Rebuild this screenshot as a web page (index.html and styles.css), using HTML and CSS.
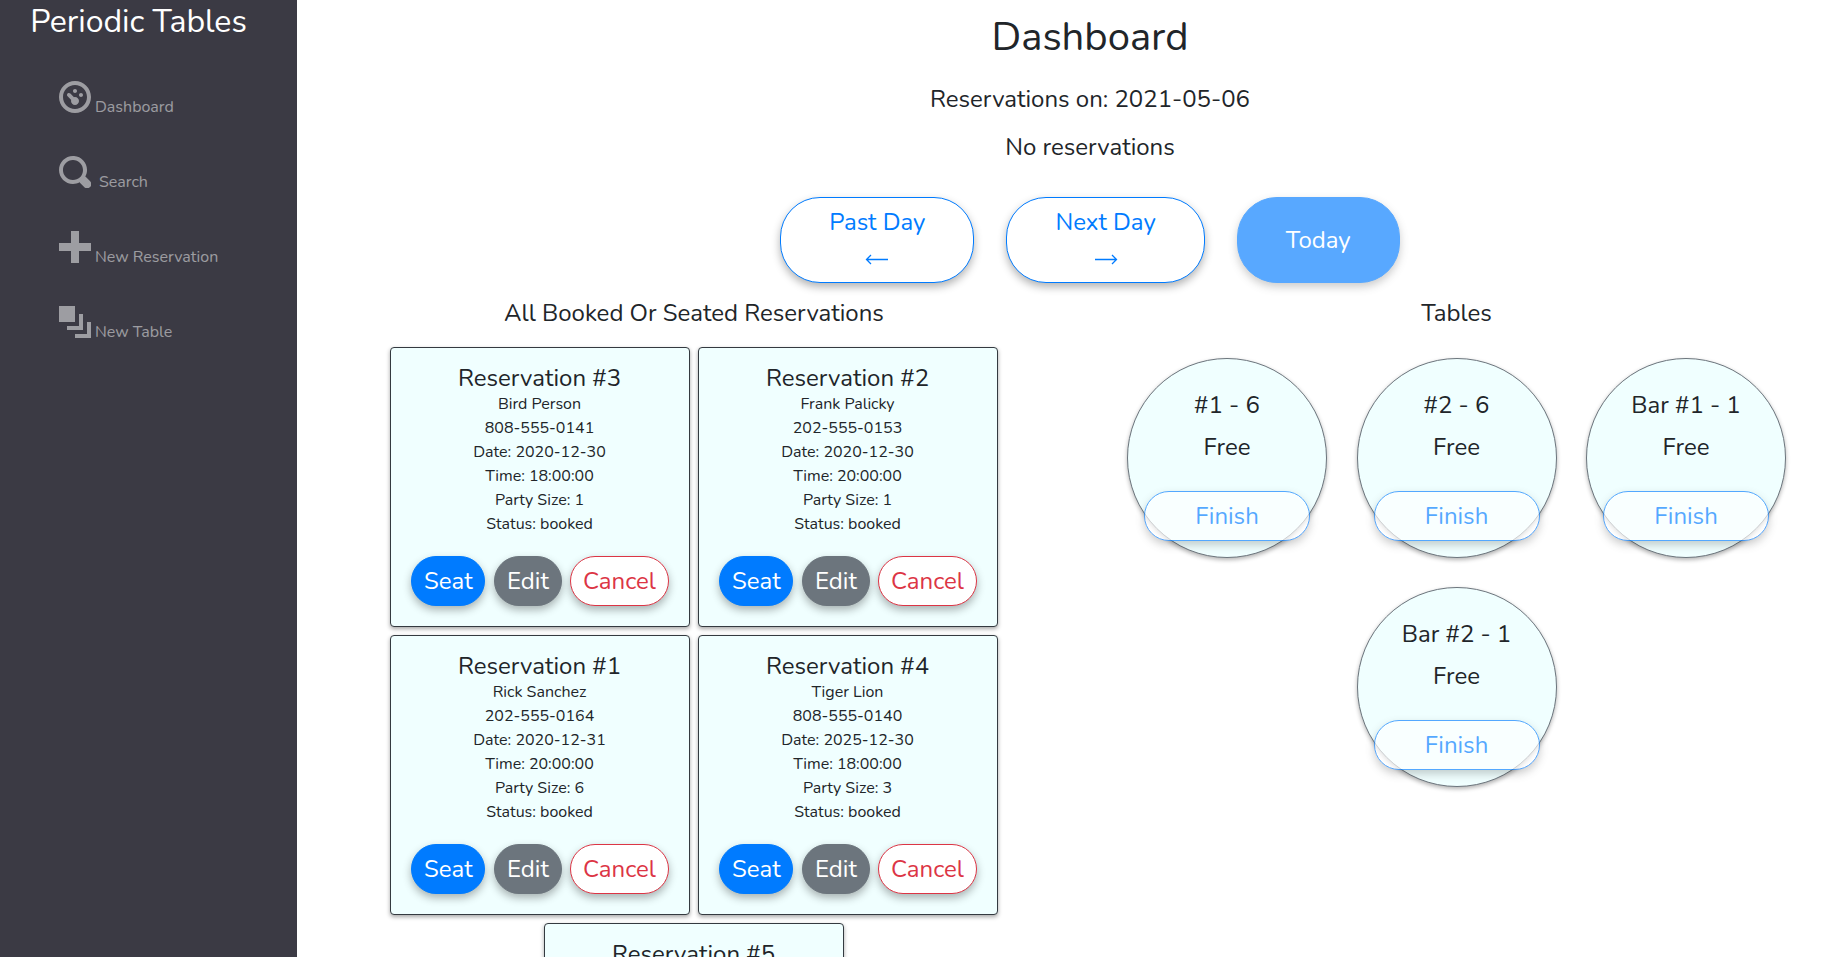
FILE: index.html
```html
<!DOCTYPE html>
<html lang="en">
<head>
<meta charset="utf-8">
<title>Periodic Tables</title>
<link rel="stylesheet" href="styles.css">
</head>
<body>
<div class="layout">
  <nav class="sidebar">
    <h2 class="brand">Periodic Tables</h2>
    <ul class="menu">
      <li><a class="menu-link" href="#"><svg class="icon" viewBox="0 0 8 8"><path d="M4 0c-2.2 0-4 1.8-4 4s1.8 4 4 4 4-1.8 4-4-1.8-4-4-4zm0 1c1.66 0 3 1.34 3 3s-1.34 3-3 3-3-1.34-3-3 1.34-3 3-3zm0 1c-.28 0-.5.22-.5.5s.22.5.5.5.5-.22.5-.5-.22-.5-.5-.5zm-1.66 1a.5.5 0 0 0-.19.84l.91.91c-.02.08-.06.16-.06.25 0 .55.45 1 1 1s1-.45 1-1-.45-1-1-1c-.09 0-.17.04-.25.06l-.91-.91a.5.5 0 0 0-.44-.16.5.5 0 0 0-.06 0zm3.16 0c-.28 0-.5.22-.5.5s.22.5.5.5.5-.22.5-.5-.22-.5-.5-.5z"/></svg><span>Dashboard</span></a></li>
      <li><a class="menu-link spaced" href="#"><svg class="icon" viewBox="0 0 8 8"><path d="M3.5 0c-1.93 0-3.5 1.57-3.5 3.5s1.57 3.5 3.5 3.5c.59 0 1.17-.14 1.66-.41a1 1 0 0 0 .13.13l1 1a1.02 1.02 0 1 0 1.44-1.44l-1-1a1 1 0 0 0-.16-.13c.27-.49.44-1.06.44-1.66 0-1.93-1.55-3.5-3.5-3.5zm0 1c1.39 0 2.5 1.11 2.5 2.5 0 .66-.24 1.27-.66 1.72-.01.01-.02.02-.03.03a1 1 0 0 0-.13.13c-.44.4-1.04.63-1.69.63-1.39 0-2.5-1.11-2.5-2.5s1.11-2.5 2.5-2.5z"/></svg><span>Search</span></a></li>
      <li><a class="menu-link" href="#"><svg class="icon" viewBox="0 0 8 8"><path d="M3 0v3h-3v2h3v3h2v-3h3v-2h-3v-3h-2z"/></svg><span>New Reservation</span></a></li>
      <li><a class="menu-link" href="#"><svg class="icon" viewBox="0 0 8 8"><path d="M0 0v4h4v-4h-4zm5 2v3h-3v1h4v-4h-1zm2 2v3h-3v1h4v-4h-1z"/></svg><span>New Table</span></a></li>
    </ul>
  </nav>
  <main class="content">
    <h1 class="page-title">Dashboard</h1>
    <h4 class="heading date">Reservations on: 2021-05-06</h4>
    <h4 class="heading empty">No reservations</h4>
    <div class="day-nav">
      <button class="btn day outline-primary">Past Day<svg class="arrow" viewBox="0 0 24 36"><path d="M23 19.5H1.5M6 15L1.5 19.5L6 24"/></svg></button>
      <button class="btn day outline-primary">Next Day<svg class="arrow" viewBox="0 0 24 36"><path d="M1 19.5H22.5M18 15L22.5 19.5L18 24"/></svg></button>
      <button class="btn day primary" disabled>Today</button>
    </div>
    <div class="columns">
      <section class="reservations">
        <h4 class="heading">All Booked Or Seated Reservations</h4>
        <div class="cards">
          <article class="card"><h4 class="heading">Reservation #3</h4><p>Bird Person</p><p>808-555-0141</p><p>Date: 2020-12-30</p><p>Time: 18:00:00</p><p>Party Size: 1</p><p>Status: booked</p><div class="actions"><button class="btn primary">Seat</button><button class="btn secondary">Edit</button><button class="btn outline-danger">Cancel</button></div></article>
          <article class="card"><h4 class="heading">Reservation #2</h4><p>Frank Palicky</p><p>202-555-0153</p><p>Date: 2020-12-30</p><p>Time: 20:00:00</p><p>Party Size: 1</p><p>Status: booked</p><div class="actions"><button class="btn primary">Seat</button><button class="btn secondary">Edit</button><button class="btn outline-danger">Cancel</button></div></article>
          <article class="card"><h4 class="heading">Reservation #1</h4><p>Rick Sanchez</p><p>202-555-0164</p><p>Date: 2020-12-31</p><p>Time: 20:00:00</p><p>Party Size: 6</p><p>Status: booked</p><div class="actions"><button class="btn primary">Seat</button><button class="btn secondary">Edit</button><button class="btn outline-danger">Cancel</button></div></article>
          <article class="card"><h4 class="heading">Reservation #4</h4><p>Tiger Lion</p><p>808-555-0140</p><p>Date: 2025-12-30</p><p>Time: 18:00:00</p><p>Party Size: 3</p><p>Status: booked</p><div class="actions"><button class="btn primary">Seat</button><button class="btn secondary">Edit</button><button class="btn outline-danger">Cancel</button></div></article>
          <article class="card"><h4 class="heading">Reservation #5</h4></article>
        </div>
      </section>
      <section class="tables">
        <h4 class="heading">Tables</h4>
        <div class="circles">
          <article class="circle"><h4 class="heading">#1 - 6</h4><h4 class="heading">Free</h4><button class="btn outline-primary finish" disabled>Finish</button></article>
          <article class="circle"><h4 class="heading">#2 - 6</h4><h4 class="heading">Free</h4><button class="btn outline-primary finish" disabled>Finish</button></article>
          <article class="circle"><h4 class="heading">Bar #1 - 1</h4><h4 class="heading">Free</h4><button class="btn outline-primary finish" disabled>Finish</button></article>
          <article class="circle"><h4 class="heading">Bar #2 - 1</h4><h4 class="heading">Free</h4><button class="btn outline-primary finish" disabled>Finish</button></article>
        </div>
      </section>
    </div>
  </main>
</div>
</body>
</html>
```

FILE: styles.css
```css
* { box-sizing: border-box; }
body {
  margin: 0;
  height: 957px;
  overflow: hidden;
  background: #fff;
  color: #212529;
  font: 400 16px/1.5 Nunito, "Open Sans", sans-serif;
}
h1, h2, h4, p, ul { margin: 0; padding: 0; font-weight: 400; }
.layout { display: flex; height: 957px; overflow: hidden; }

/* Sidebar */
.sidebar { flex: 0 0 297px; background: #3b3a44; }
.brand { padding: 3px 20px 0 0; text-align: center; color: #fff; font-size: 32px; line-height: 38px; }
.menu { list-style: none; padding: 40px 0 0 59px; }
.menu-link {
  display: flex;
  align-items: flex-end;
  gap: 4px;
  height: 32px;
  margin-bottom: 43px;
  color: rgba(255, 255, 255, .5);
  text-decoration: none;
  line-height: 24px;
}
.menu-link span { margin-bottom: -6px; }
.menu-link.spaced { gap: 8px; }
.icon { width: 32px; height: 32px; fill: currentColor; }

/* Header */
.content { flex: 1; padding: 13px 0 0 57px; text-align: center; }
.page-title { font-size: 40px; line-height: 48px; }
.heading { font-size: 24px; line-height: 28.8px; }
.date { padding-top: 24px; }
.empty { padding-top: 19px; }
.day-nav { display: flex; justify-content: center; gap: 32px; margin: 35.4px 0 16px; }

/* Buttons */
.btn {
  padding: 6px 12px;
  border: 1px solid;
  border-radius: 40px;
  background: #fff;
  box-shadow: 0 4px 8px rgba(0, 0, 0, .3);
  font: 400 24px/36px Nunito, "Open Sans", sans-serif;
}
.btn:disabled { opacity: .65; }
.day { padding: 6px 48px; }
.arrow { display: block; width: 24px; height: 36px; margin: 0 auto; fill: none; stroke: currentColor; stroke-width: 1.3; }
.primary { background: #007bff; border-color: #007bff; color: #fff; }
.secondary { background: #6c757d; border-color: #6c757d; color: #fff; }
.outline-primary { border-color: #007bff; color: #007bff; }
.outline-danger { border-color: #dc3545; color: #dc3545; }

/* Reservations */
.columns { display: flex; justify-content: space-between; }
.reservations { width: 680px; }
.tables { width: 739px; }
.cards { display: flex; flex-wrap: wrap; justify-content: center; gap: 8px; padding-top: 19px; }
.card {
  width: 300px;
  height: 280px;
  padding: 16px 1px 16px 0;
  border: 1px solid #343a40;
  border-radius: 4px;
  background: #f0ffff;
  box-shadow: 0 2px 4px rgba(0, 0, 0, .35);
}
.card .heading { margin-bottom: -1px; }
.actions { display: flex; justify-content: center; gap: 8.7px; padding: 20px 0 0 1px; }
.actions .btn { padding: 6px 11.8px; }

/* Tables */
.circles { display: flex; flex-wrap: wrap; justify-content: center; gap: 29px 29.5px; padding-top: 30px; }
.circle {
  display: flex;
  flex-direction: column;
  align-items: center;
  gap: 13.4px;
  width: 200px;
  height: 200px;
  padding-top: 32px;
  border: 1px solid #6c757d;
  border-radius: 50%;
  background: #f0ffff;
  box-shadow: 0 2px 4px rgba(0, 0, 0, .3);
}
.finish { width: 166px; flex-shrink: 0; margin-top: 16px; }
```
